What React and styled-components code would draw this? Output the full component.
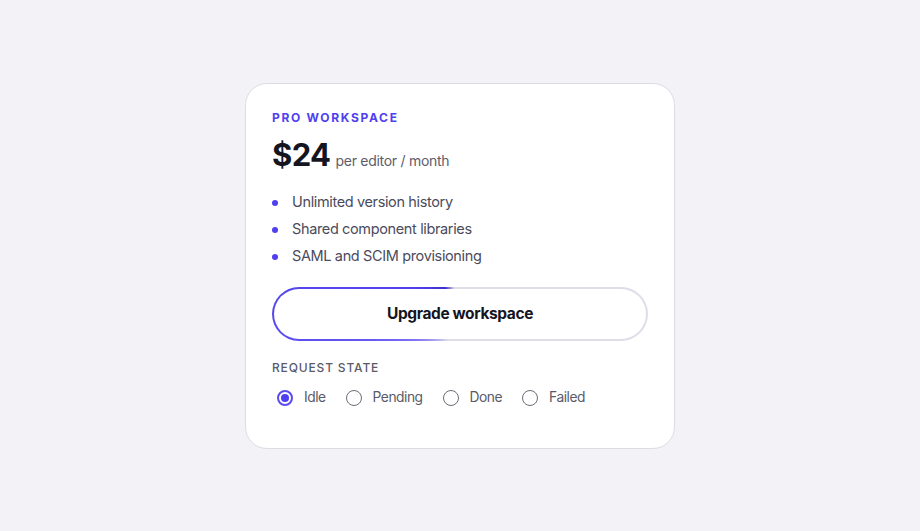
import { useState } from "react";
import styled, { createGlobalStyle } from "styled-components";

const GlobalStyle = createGlobalStyle`
  * { box-sizing: border-box; }
  body {
    margin: 0;
    background: #f2f2f7;
    font-family: Inter, "Noto Sans", sans-serif;
    -webkit-font-smoothing: antialiased;
  }
`;

const features = [
  "Unlimited version history",
  "Shared component libraries",
  "SAML and SCIM provisioning",
];

const states = ["Idle", "Pending", "Done", "Failed"];

const App = () => {
  const [state, setState] = useState("Idle");

  return (
    <Page>
      <GlobalStyle />
      <Card>
        <Eyebrow>Pro workspace</Eyebrow>
        <PriceRow>
          <Price>$24</Price>
          <Per>per editor / month</Per>
        </PriceRow>
        <Features>
          {features.map((f) => (
            <Feature key={f}>{f}</Feature>
          ))}
        </Features>
        <UpgradeButton type="button">Upgrade workspace</UpgradeButton>
        <SectionLabel>Request state</SectionLabel>
        <Radios>
          {states.map((s) => (
            <RadioLabel key={s}>
              <RadioInput
                type="radio"
                name="state"
                checked={state === s}
                onChange={() => setState(s)}
              />
              <RadioDot checked={state === s} />
              {s}
            </RadioLabel>
          ))}
        </Radios>
      </Card>
    </Page>
  );
};

export default App;

const Page = styled.div`
  min-height: 100vh;
  display: flex;
  align-items: center;
  justify-content: center;
`;

const Card = styled.div`
  width: 430px;
  height: 366px;
  background: #fff;
  border: 1px solid #dcdce5;
  border-radius: 22px;
  padding: 26px 26px 0 26px;
  display: flex;
  flex-direction: column;
`;

const Eyebrow = styled.div`
  font-size: 12px;
  line-height: 16px;
  font-weight: 700;
  letter-spacing: 0.14em;
  text-transform: uppercase;
  color: #4f3ff0;
`;

const PriceRow = styled.div`
  display: flex;
  align-items: baseline;
  gap: 5px;
  margin-top: 7px;
`;

const Price = styled.span`
  font-size: 31px;
  line-height: 44px;
  font-weight: 700;
  letter-spacing: -0.02em;
  color: #15151f;
`;

const Per = styled.span`
  font-size: 14px;
  letter-spacing: -0.02em;
  color: #5d5d6c;
`;

const Features = styled.ul`
  list-style: none;
  margin: 15px 0 0;
  padding: 0;
  display: flex;
  flex-direction: column;
  gap: 7px;
`;

const Feature = styled.li`
  display: flex;
  align-items: center;
  gap: 14px;
  font-size: 14.5px;
  line-height: 20px;
  letter-spacing: -0.025em;
  color: #4b4b5b;

  &::before {
    content: "";
    width: 6px;
    height: 6px;
    margin-top: 2px;
    border-radius: 50%;
    background: #4f3ff0;
  }
`;

const UpgradeButton = styled.button`
  margin-top: 21px;
  height: 54px;
  width: 100%;
  border-radius: 999px;
  border: 2px solid transparent;
  background:
    linear-gradient(#fff, #fff) padding-box,
    conic-gradient(
        #dedde8 0deg,
        #dedde8 205deg,
        #8074f3 240deg,
        #5a4cf0 262deg,
        #4f3fe8 300deg,
        #3a2fcf 330deg,
        #dedde8 348deg
      )
      border-box;
  font-family: inherit;
  font-size: 15.5px;
  letter-spacing: -0.025em;
  font-weight: 700;
  color: #15151f;
  cursor: pointer;
`;

const SectionLabel = styled.div`
  margin-top: 19px;
  font-size: 12px;
  line-height: 16px;
  font-weight: 500;
  letter-spacing: 0.07em;
  text-transform: uppercase;
  color: #5a5a68;
`;

const Radios = styled.div`
  display: flex;
  align-items: center;
  gap: 20px;
  margin-top: 11px;
  padding-left: 5px;
`;

const RadioLabel = styled.label`
  display: flex;
  align-items: center;
  gap: 11px;
  font-size: 13.8px;
  line-height: 20px;
  letter-spacing: -0.035em;
  color: #5a5a68;
  cursor: pointer;
`;

const RadioInput = styled.input`
  position: absolute;
  opacity: 0;
  pointer-events: none;
`;

const RadioDot = styled.span`
  width: 16px;
  height: 16px;
  margin-top: 2px;
  border-radius: 50%;
  border: ${({ checked }) =>
    checked ? "2px solid #5b4cf0" : "1.5px solid #6c6c78"};
  display: grid;
  place-items: center;

  &::after {
    content: "";
    width: 8px;
    height: 8px;
    border-radius: 50%;
    background: ${({ checked }) => (checked ? "#4f3ff0" : "transparent")};
  }
`;
